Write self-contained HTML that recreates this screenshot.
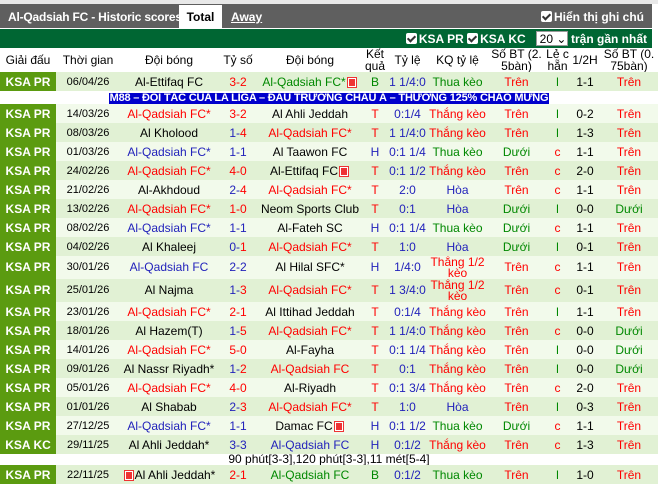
<!DOCTYPE html>
<html><head><meta charset="utf-8"><style>
*{margin:0;padding:0;box-sizing:border-box}
body{width:658px;height:482px;overflow:hidden;background:#fff;font-family:"Liberation Sans",Arial,sans-serif;font-size:12px;position:relative}
.top{position:absolute;left:0;top:0;width:658px;height:4px;background:#e8e8e8}
.bar{position:absolute;left:0;top:4px;width:652px;height:24px;background:#5f5f5f;color:#fff;font-weight:bold;font-size:12px}
.bar .t{position:absolute;left:8px;top:6px;letter-spacing:-0.2px}
.tab{position:absolute;left:179px;top:1px;width:43px;height:23px;background:#fff;color:#000;text-align:center;padding-top:5px}
.away{position:absolute;left:231px;top:6px;text-decoration:underline;color:#fff}
.note{position:absolute;right:8px;top:6px;font-size:12px}
.cb{display:inline-block;width:11px;height:11px;background:#fff;border-radius:2px;vertical-align:-1px;margin-right:2px;position:relative}
.cb:after{content:"";position:absolute;left:3px;top:1px;width:3px;height:6px;border:solid #333;border-width:0 2px 2px 0;transform:rotate(45deg)}
.gbar{position:absolute;left:0;top:29px;width:652px;height:19px;background:#006633;color:#fff;font-weight:bold;font-size:12px}
.gbar .rt{position:absolute;right:5px;top:2px;color:#fff}
.sel{display:inline-block;background:#fff;color:#000;width:32px;height:15px;font-weight:normal;padding-left:3px;vertical-align:0;border:1px solid #999}
table{position:absolute;left:0;top:48px;width:658px;border-collapse:collapse;table-layout:fixed}
td,th{text-align:center;padding:0;line-height:12px;overflow:hidden;white-space:nowrap}
th{height:24px;font-weight:normal;font-size:12px;color:#000;white-space:normal;line-height:12px}
td{height:19px}
td.l{background:#5b9b10;color:#fff;font-weight:bold;font-size:12px}
tr.a td{background:#f2faeb}tr.b td{background:#e1f1d4}
tr.a td.l,tr.b td.l{background:#5b9b10}
td.d{font-size:11px}
.r{color:#f00}.u{color:#22b}.g{color:#080}.k{color:#000}
tr.ad td{height:10px;background:#fff}
.adb{display:inline-block;background:#00c;color:#fff;font-weight:bold;font-size:11px;line-height:11px;height:11px;padding:0 1px;letter-spacing:-0.2px}
tr.n td{height:11px;background:#fff;font-size:12px;line-height:11px}
.ic{display:inline-block;width:8px;height:9px;background:#e33;vertical-align:-1px;margin:0 2px;border:1px solid #fff;box-shadow:0 0 0 1px #e33}
tr.tall td{height:23px;line-height:11px}
</style></head><body>
<div class="top"></div>
<div class="bar"><span class="t">Al-Qadsiah FC - Historic scores</span><div class="tab">Total</div><span class="away">Away</span><span class="note"><span class="cb"></span>Hiển thị ghi chú</span></div>
<div class="gbar"><span class="rt"><span class="cb"></span>KSA PR <span class="cb"></span>KSA KC &nbsp; <span class="sel">20 ⌄</span> trận gần nhất</span></div>
<table>
<colgroup><col style="width:56px"><col style="width:64px"><col style="width:98px"><col style="width:40px"><col style="width:104px"><col style="width:26px"><col style="width:39px"><col style="width:61px"><col style="width:57px"><col style="width:25px"><col style="width:30px"><col style="width:58px"></colgroup>
<tr><th>Giải đấu</th><th>Thời gian</th><th>Đội bóng</th><th>Tỷ số</th><th>Đội bóng</th><th>Kết quả</th><th>Tỷ lệ</th><th>KQ tỷ lệ</th><th>Số BT (2. 5bàn)</th><th>Lẻ c hẵn</th><th>1/2H</th><th>Số BT (0. 75bàn)</th></tr>
<tr class="b"><td class="l">KSA PR</td><td class="d">06/04/26</td><td>Al-Ettifaq FC</td><td class="r">3-2</td><td class="g">Al-Qadsiah FC*<span class="ic"></span></td><td class="g">B</td><td class="u">1 1/4:0</td><td class="g">Thua kèo</td><td class="r">Trên</td><td class="g">l</td><td>1-1</td><td class="r">Trên</td></tr>
<tr class="ad"><td colspan="12"><span class="adb">M88 – ĐỐI TÁC CỦA LA LIGA – ĐẤU TRƯỜNG CHÂU Á – THƯỞNG 125% CHÀO MỪNG</span></td></tr>
<tr class="a"><td class="l">KSA PR</td><td class="d">14/03/26</td><td class="r">Al-Qadsiah FC*</td><td class="r">3-2</td><td>Al Ahli Jeddah</td><td class="r">T</td><td class="u">0:1/4</td><td class="r">Thắng kèo</td><td class="r">Trên</td><td class="g">l</td><td>0-2</td><td class="r">Trên</td></tr>
<tr class="b"><td class="l">KSA PR</td><td class="d">08/03/26</td><td>Al Kholood</td><td><span class="u">1-</span><span class="r">4</span></td><td class="r">Al-Qadsiah FC*</td><td class="r">T</td><td class="u">1 1/4:0</td><td class="r">Thắng kèo</td><td class="r">Trên</td><td class="g">l</td><td>1-3</td><td class="r">Trên</td></tr>
<tr class="a"><td class="l">KSA PR</td><td class="d">01/03/26</td><td class="u">Al-Qadsiah FC*</td><td class="u">1-1</td><td>Al Taawon FC</td><td class="u">H</td><td class="u">0:1 1/4</td><td class="g">Thua kèo</td><td class="g">Dưới</td><td class="r">c</td><td>1-1</td><td class="r">Trên</td></tr>
<tr class="b"><td class="l">KSA PR</td><td class="d">24/02/26</td><td class="r">Al-Qadsiah FC*</td><td class="r">4-0</td><td>Al-Ettifaq FC<span class="ic"></span></td><td class="r">T</td><td class="u">0:1 1/2</td><td class="r">Thắng kèo</td><td class="r">Trên</td><td class="r">c</td><td>2-0</td><td class="r">Trên</td></tr>
<tr class="a"><td class="l">KSA PR</td><td class="d">21/02/26</td><td>Al-Akhdoud</td><td><span class="u">2-</span><span class="r">4</span></td><td class="r">Al-Qadsiah FC*</td><td class="r">T</td><td class="u">2:0</td><td class="u">Hòa</td><td class="r">Trên</td><td class="r">c</td><td>1-1</td><td class="r">Trên</td></tr>
<tr class="b"><td class="l">KSA PR</td><td class="d">13/02/26</td><td class="r">Al-Qadsiah FC*</td><td class="r">1-0</td><td>Neom Sports Club</td><td class="r">T</td><td class="u">0:1</td><td class="u">Hòa</td><td class="g">Dưới</td><td class="g">l</td><td>0-0</td><td class="g">Dưới</td></tr>
<tr class="a"><td class="l">KSA PR</td><td class="d">08/02/26</td><td class="u">Al-Qadsiah FC*</td><td class="u">1-1</td><td>Al-Fateh SC</td><td class="u">H</td><td class="u">0:1 1/4</td><td class="g">Thua kèo</td><td class="g">Dưới</td><td class="r">c</td><td>1-1</td><td class="r">Trên</td></tr>
<tr class="b"><td class="l">KSA PR</td><td class="d">04/02/26</td><td>Al Khaleej</td><td><span class="u">0-</span><span class="r">1</span></td><td class="r">Al-Qadsiah FC*</td><td class="r">T</td><td class="u">1:0</td><td class="u">Hòa</td><td class="g">Dưới</td><td class="g">l</td><td>0-1</td><td class="r">Trên</td></tr>
<tr class="a tall"><td class="l">KSA PR</td><td class="d">30/01/26</td><td class="u">Al-Qadsiah FC</td><td class="u">2-2</td><td>Al Hilal SFC*</td><td class="u">H</td><td class="u">1/4:0</td><td class="r" style="white-space:normal">Thắng 1/2 kèo</td><td class="r">Trên</td><td class="r">c</td><td>1-1</td><td class="r">Trên</td></tr>
<tr class="b tall"><td class="l">KSA PR</td><td class="d">25/01/26</td><td>Al Najma</td><td><span class="u">1-</span><span class="r">3</span></td><td class="r">Al-Qadsiah FC*</td><td class="r">T</td><td class="u">1 3/4:0</td><td class="r" style="white-space:normal">Thắng 1/2 kèo</td><td class="r">Trên</td><td class="r">c</td><td>0-1</td><td class="r">Trên</td></tr>
<tr class="a"><td class="l">KSA PR</td><td class="d">23/01/26</td><td class="r">Al-Qadsiah FC*</td><td class="r">2-1</td><td>Al Ittihad Jeddah</td><td class="r">T</td><td class="u">0:1/4</td><td class="r">Thắng kèo</td><td class="r">Trên</td><td class="g">l</td><td>1-1</td><td class="r">Trên</td></tr>
<tr class="b"><td class="l">KSA PR</td><td class="d">18/01/26</td><td>Al Hazem(T)</td><td><span class="u">1-</span><span class="r">5</span></td><td class="r">Al-Qadsiah FC*</td><td class="r">T</td><td class="u">1 1/4:0</td><td class="r">Thắng kèo</td><td class="r">Trên</td><td class="r">c</td><td>0-0</td><td class="g">Dưới</td></tr>
<tr class="a"><td class="l">KSA PR</td><td class="d">14/01/26</td><td class="r">Al-Qadsiah FC*</td><td class="r">5-0</td><td>Al-Fayha</td><td class="r">T</td><td class="u">0:1 1/4</td><td class="r">Thắng kèo</td><td class="r">Trên</td><td class="g">l</td><td>0-0</td><td class="g">Dưới</td></tr>
<tr class="b"><td class="l">KSA PR</td><td class="d">09/01/26</td><td>Al Nassr Riyadh*</td><td><span class="u">1-</span><span class="r">2</span></td><td class="r">Al-Qadsiah FC</td><td class="r">T</td><td class="u">0:1</td><td class="r">Thắng kèo</td><td class="r">Trên</td><td class="g">l</td><td>0-0</td><td class="g">Dưới</td></tr>
<tr class="a"><td class="l">KSA PR</td><td class="d">05/01/26</td><td class="r">Al-Qadsiah FC*</td><td class="r">4-0</td><td>Al-Riyadh</td><td class="r">T</td><td class="u">0:1 3/4</td><td class="r">Thắng kèo</td><td class="r">Trên</td><td class="r">c</td><td>2-0</td><td class="r">Trên</td></tr>
<tr class="b"><td class="l">KSA PR</td><td class="d">01/01/26</td><td>Al Shabab</td><td><span class="u">2-</span><span class="r">3</span></td><td class="r">Al-Qadsiah FC*</td><td class="r">T</td><td class="u">1:0</td><td class="u">Hòa</td><td class="r">Trên</td><td class="g">l</td><td>0-3</td><td class="r">Trên</td></tr>
<tr class="a"><td class="l">KSA PR</td><td class="d">27/12/25</td><td class="u">Al-Qadsiah FC*</td><td class="u">1-1</td><td>Damac FC<span class="ic"></span></td><td class="u">H</td><td class="u">0:1 1/2</td><td class="g">Thua kèo</td><td class="g">Dưới</td><td class="r">c</td><td>1-1</td><td class="r">Trên</td></tr>
<tr class="b"><td class="l">KSA KC</td><td class="d">29/11/25</td><td>Al Ahli Jeddah*</td><td class="u">3-3</td><td class="u">Al-Qadsiah FC</td><td class="u">H</td><td class="u">0:1/2</td><td class="r">Thắng kèo</td><td class="r">Trên</td><td class="r">c</td><td>1-3</td><td class="r">Trên</td></tr>
<tr class="n"><td colspan="12">90 phút[3-3],120 phút[3-3],11 mét[5-4]</td></tr>
<tr class="b"><td class="l">KSA PR</td><td class="d">22/11/25</td><td><span class="ic"></span>Al Ahli Jeddah*</td><td class="r">2-1</td><td class="g">Al-Qadsiah FC</td><td class="g">B</td><td class="u">0:1/2</td><td class="g">Thua kèo</td><td class="r">Trên</td><td class="g">l</td><td>1-0</td><td class="r">Trên</td></tr>
</table>
</body></html>
